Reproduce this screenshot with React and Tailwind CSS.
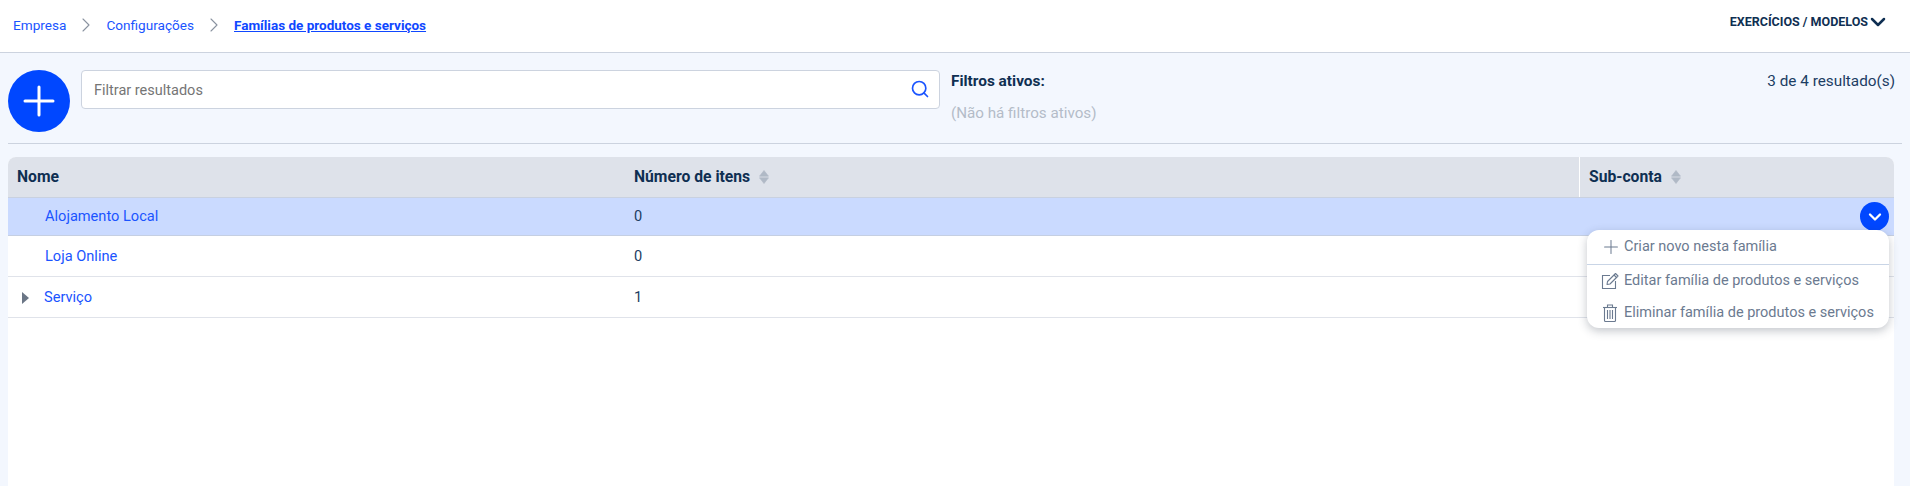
import React from 'react';
import { ChevronRight, ChevronDown, Search, Plus } from 'lucide-react';

const SortIcon = () => (
  <svg width="10" height="14" viewBox="0 0 10 14" className="text-[#b0b9c6] fill-current">
    <path d="M5 0.5 9.5 6.2H0.5Z" stroke="currentColor" strokeWidth="0.6" strokeLinejoin="round" />
    <path d="M5 13.5 0.5 7.8H9.5Z" stroke="currentColor" strokeWidth="0.6" strokeLinejoin="round" />
  </svg>
);

const EditIcon = () => (
  <svg width="18" height="18" viewBox="0 0 18 18" fill="none" stroke="currentColor" strokeWidth="1.1" className="shrink-0">
    <path d="M9 3.5H1.5V16.5H14.5V9" />
    <path d="M6.5 9.5 14.5 1.5 17 4 9 12 6 12.5Z" strokeLinejoin="round" />
    <path d="M13 3 15.5 5.5" />
  </svg>
);

const TrashIcon = () => (
  <svg width="16" height="18" viewBox="0 0 16 18" fill="none" stroke="currentColor" strokeWidth="1.1" className="shrink-0">
    <path d="M1 3.5H15" />
    <path d="M5.5 3.5V1H10.5V3.5" />
    <path d="M2.5 3.5V16.5Q2.5 17.5 3.5 17.5H12.5Q13.5 17.5 13.5 16.5V3.5" />
    <path d="M5.5 6V15M8 6V15M10.5 6V15" />
  </svg>
);

const Row = ({ name, count, selected, expandable, children }) => (
  <div className={`flex border-b text-[14.6px] ${selected ? 'h-[38px] bg-[#cadaff] border-[#c5cfe2]' : 'h-[41px] pt-[1px] bg-white border-[#e0e3ea]'}`}>
    <div className="w-[617px] flex items-center shrink-0">
      {expandable ? (
        <svg width="7" height="12" viewBox="0 0 7 12" className="ml-[14px] mr-[15px] fill-[#6b7686]">
          <path d="M0 0 7 6 0 12Z" />
        </svg>
      ) : (
        <span className="w-[37px]" />
      )}
      <a className="text-[#1a54ff]">{name}</a>
    </div>
    <div className="w-[954px] shrink-0 flex items-center pl-[9px] text-[#1c3d63]">{count}</div>
    <div className="flex-1 flex items-center justify-end pr-[5px]">{children}</div>
  </div>
);

const App = () => {
  return (
    <div className="h-[486px] overflow-hidden bg-[#f3f7fe] font-['Roboto',sans-serif] text-[15px]">
      <header className="h-[53px] bg-white border-b border-[#ccd3df] flex items-center justify-between pl-[13px] pr-[20px]">
        <nav className="flex items-center text-[13.6px] text-[#1a54ff] pb-[2px]">
          <a>Empresa</a>
          <ChevronRight className="w-[24px] h-[24px] mx-[8px] text-[#8a93a0]" strokeWidth={1.1} />
          <a>Configurações</a>
          <ChevronRight className="w-[24px] h-[24px] mx-[8px] text-[#8a93a0]" strokeWidth={1.1} />
          <a className="font-bold underline text-[#0f47ff] text-[13.5px]">Famílias de produtos e serviços</a>
        </nav>
        <button className="flex items-center text-[12.5px] font-bold text-[#0f2f52] pb-[8px]">
          EXERCÍCIOS / MODELOS
          <ChevronDown className="w-[24px] h-[24px] -ml-[2px]" strokeWidth={2.5} />
        </button>
      </header>

      <div className="mx-2 h-[91px] border-b border-[#ccd3df] flex pt-[17px]">
        <button className="w-[62px] h-[62px] rounded-full bg-[#0047ff] flex items-center justify-center shrink-0">
          <Plus className="w-[48px] h-[48px] text-white" strokeWidth={1.5} />
        </button>
        <div className="ml-[11px] w-[859px] h-[39px] bg-white border border-[#ccd3df] rounded flex items-center justify-between pl-3 pr-[9px] shrink-0">
          <span className="text-[#757575] text-[14.5px] pt-[2px]">Filtrar resultados</span>
          <Search className="w-[20px] h-[20px] text-[#1a54ff] mb-[2px]" strokeWidth={2} />
        </div>
        <div className="ml-[11px] flex-1 flex justify-between pr-[7px]">
          <div>
            <p className="font-bold text-[#0f2f52] text-[15.4px] leading-5 pt-[1px]">Filtros ativos:</p>
            <p className="mt-[12px] text-[#b4bcc8] text-[15.2px] leading-5">(Não há filtros ativos)</p>
          </div>
          <p className="text-[#1c3d63] text-[15.3px] leading-5 pt-[1px]">3 de 4 resultado(s)</p>
        </div>
      </div>

      <div className="relative ml-2 mr-[16px] mt-[13px] bg-white rounded-t-lg h-[400px]">
        <div className="flex h-[41px] bg-[#dee2ea] rounded-t-lg border-b border-[#c9d1e0] font-bold text-[#0f2f52] text-[15.7px]">
          <div className="w-[617px] shrink-0 flex items-center pl-[9px]">Nome</div>
          <div className="w-[954px] shrink-0 flex items-center gap-[9px] pl-[9px]">
            Número de itens
            <SortIcon />
          </div>
          <div className="flex-1 flex items-center gap-[9px] pl-[9px] border-l border-white">
            Sub-conta
            <SortIcon />
          </div>
        </div>
        <Row name="Alojamento Local" count="0" selected>
          <span className="w-[29px] h-[29px] rounded-full bg-[#0047ff] flex items-center justify-center">
            <ChevronDown className="w-[20px] h-[20px] text-white" strokeWidth={2.75} />
          </span>
        </Row>
        <Row name="Loja Online" count="0" />
        <Row name="Serviço" count="1" expandable />

        <div className="absolute top-[73px] left-[1579px] w-[302px] h-[98px] bg-white rounded-xl shadow-[0_3px_10px_rgba(40,50,70,0.28)] text-[#6b7a90] text-[14.5px]">
          <div className="h-[35px] flex items-center border-b border-[#c9d5e6] pl-[13px] gap-[2px]">
            <Plus className="w-[22px] h-[22px]" strokeWidth={1.1} />
            <span>Criar novo nesta família</span>
          </div>
          <div className="h-[32px] flex items-center pl-[14px] gap-[5px]">
            <EditIcon />
            <span>Editar família de produtos e serviços</span>
          </div>
          <div className="h-[31px] flex items-center pl-[15px] gap-[6px]">
            <TrashIcon />
            <span>Eliminar família de produtos e serviços</span>
          </div>
        </div>
      </div>
    </div>
  );
};

export default App;
